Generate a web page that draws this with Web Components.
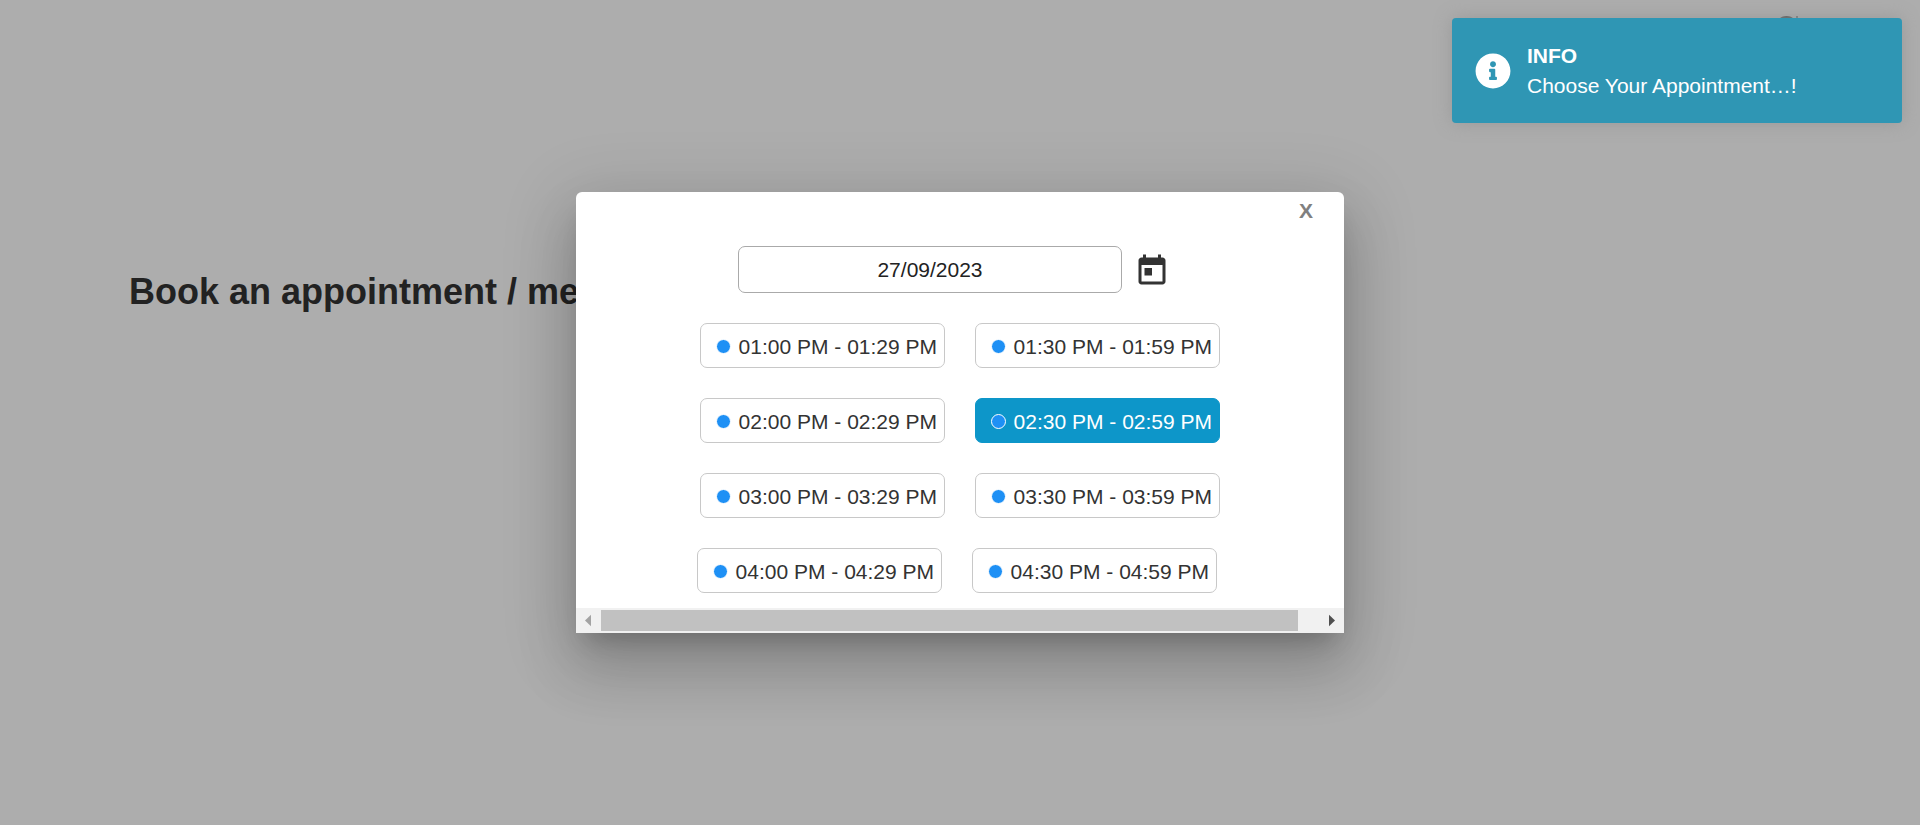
<!DOCTYPE html>
<html lang="en">
<head>
<meta charset="utf-8">
<title>Book an appointment</title>
<style>
html,body{margin:0;height:100%;overflow:hidden;background:#adadad}
body{font-family:"Liberation Sans",Arial,sans-serif}
</style>
</head>
<body>
<booking-page></booking-page>
<script>
const define = (name, html) => customElements.define(name, class extends HTMLElement {
  constructor() {
    super();
    const t = document.createElement('template');
    t.innerHTML = html;
    this.attachShadow({ mode: 'open' }).append(t.content.cloneNode(true));
  }
});

define('time-slot', `
<style>
:host{box-sizing:border-box;display:flex;align-items:center;width:245px;height:45px;border:1px solid #c8c8c8;border-radius:7px;background:#fff;color:#333;font-size:21px;line-height:24px;padding:2px 0 0 15px;white-space:nowrap}
i{box-sizing:border-box;flex:none;width:15px;height:15px;border-radius:50%;border:1px solid #fff;background:#1e90f5;margin-right:7.6px}
:host([selected]){background:#0d96c9;border-color:#0d96c9;color:#fff}
</style><i></i><slot></slot>`);

define('slot-row', `
<style>:host{display:flex;justify-content:center;gap:30px;height:45px}
:host([last]){padding-right:6px}</style><slot></slot>`);

define('date-field', `
<style>
:host{display:flex;align-items:center;height:47px;padding-left:162px}
.box{box-sizing:border-box;width:384px;height:47px;border:1px solid #aaa;border-radius:7px;display:flex;align-items:center;justify-content:center;font-size:21px;line-height:24px;color:#222}
svg{width:36px;height:36px;margin:2px 0 0 12px;display:block}
</style>
<div class="box"><slot></slot></div>
<svg viewBox="0 0 24 24" fill="#333"><path d="M19 3h-1V1h-2v2H8V1H6v2H5c-1.11 0-1.99.9-1.99 2L3 19c0 1.1.89 2 2 2h14c1.1 0 2-.9 2-2V5c0-1.1-.9-2-2-2zm0 16H5V8h14v11zM7 10h5v5H7z"/></svg>`);

define('scroll-strip', `
<style>
:host{display:flex;align-items:center;height:25px;background:#f1f1f1}
svg{width:25px;height:25px;flex:none;display:block}
.track{flex:1;height:21px}
.thumb{width:697px;height:21px;background:#c1c1c1}
</style>
<svg viewBox="0 0 25 25"><path d="M9 12.5l6-5.7v11.4z" fill="#a3a3a3"/></svg>
<div class="track"><div class="thumb"></div></div>
<svg viewBox="0 0 25 25"><path d="M16 12.5l-6-5.7v11.4z" fill="#505050"/></svg>`);

define('booking-dialog', `
<style>
:host{display:flex;flex-direction:column;width:768px;height:441px;background:#fff;border-radius:6px 6px 0 0;box-shadow:0 16.5px 22.5px -10.5px rgba(0,0,0,.2),0 36px 57px 4.5px rgba(0,0,0,.14),0 13.5px 69px 12px rgba(0,0,0,.12)}
.head{height:54px;display:flex;justify-content:flex-end;padding-right:31px;box-sizing:border-box}
b{font-size:21px;line-height:24px;margin-top:7px;color:gray}
.slots{display:flex;flex-direction:column;gap:30px;margin-top:30px;flex:1}
</style>
<div class="head"><b>X</b></div>
<slot name="date"></slot>
<div class="slots"><slot></slot></div>
<scroll-strip></scroll-strip>`);

define('info-toast', `
<style>
:host{box-sizing:border-box;display:flex;align-items:center;width:450px;height:105px;padding-left:23px;border-radius:4px;background:#2f96b4;color:#fff;box-shadow:0 0 18px #999;font-size:21px;line-height:30px}
svg{width:36px;height:36px;margin-right:16px;flex:none}
.t{display:flex;flex-direction:column;padding-top:1px}
</style>
<svg viewBox="0 0 512 512" fill="#fff"><path d="M256 8C119.043 8 8 119.083 8 256c0 136.997 111.043 248 248 248s248-111.003 248-248C504 119.083 392.957 8 256 8zm0 110c23.196 0 42 18.804 42 42s-18.804 42-42 42-42-18.804-42-42 18.804-42 42-42zm56 254c0 6.627-5.373 12-12 12h-88c-6.627 0-12-5.373-12-12v-24c0-6.627 5.373-12 12-12h12v-64h-12c-6.627 0-12-5.373-12-12v-24c0-6.627 5.373-12 12-12h64c6.627 0 12 5.373 12 12v100h12c6.627 0 12 5.373 12 12v24z"/></svg>
<div class="t"><b><slot name="title"></slot></b><span><slot></slot></span></div>`);

define('booking-page', `
<style>
:host{display:block;position:relative;width:1920px;height:825px;overflow:hidden;background:#adadad}
h1{margin:0;padding:271px 0 0 129px;font-size:36px;line-height:42px;color:#222;white-space:nowrap}
.avatar{position:absolute;left:1775px;top:16px;width:23px;height:23px;border-radius:50%;background:#484848}
.tick{position:absolute;left:1796px;top:16px;width:2px;height:8px;background:#707070}
booking-dialog{position:absolute;left:576px;top:192px}
info-toast{position:absolute;left:1452px;top:18px}
</style>
<h1>Book an appointment / me</h1>
<div class="avatar"></div><div class="tick"></div>
<booking-dialog>
<date-field slot="date">27/09/2023</date-field>
<slot-row><time-slot>01:00 PM - 01:29 PM</time-slot><time-slot>01:30 PM - 01:59 PM</time-slot></slot-row>
<slot-row><time-slot>02:00 PM - 02:29 PM</time-slot><time-slot selected>02:30 PM - 02:59 PM</time-slot></slot-row>
<slot-row><time-slot>03:00 PM - 03:29 PM</time-slot><time-slot>03:30 PM - 03:59 PM</time-slot></slot-row>
<slot-row last><time-slot>04:00 PM - 04:29 PM</time-slot><time-slot>04:30 PM - 04:59 PM</time-slot></slot-row>
</booking-dialog>
<info-toast><span slot="title">INFO</span>Choose Your Appointment…!</info-toast>`);
</script>
</body>
</html>
